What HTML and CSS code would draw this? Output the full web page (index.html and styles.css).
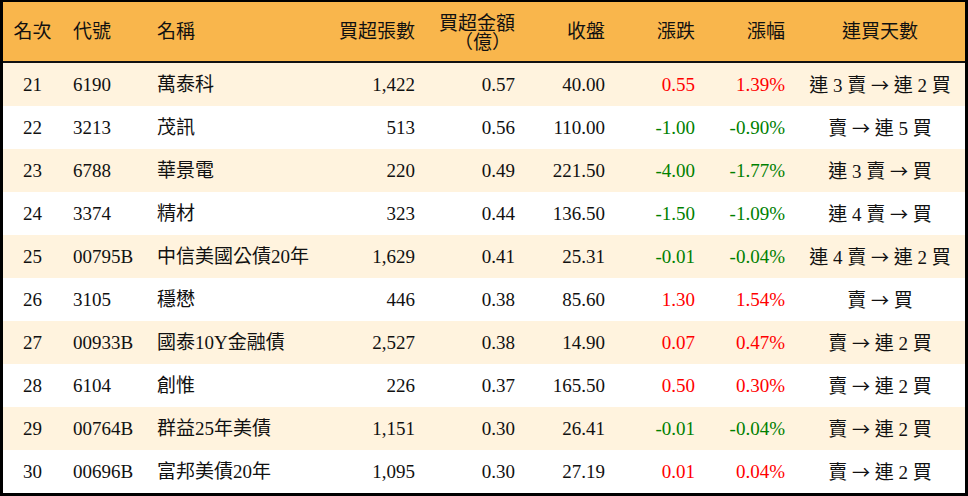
FILE: index.html
```html
<!DOCTYPE html>
<html lang="zh-Hant">
<head>
<meta charset="utf-8">
<title>買超排行</title>
<link rel="stylesheet" href="styles.css">
</head>
<body>
<div class="board">
<table class="rank">
<colgroup>
<col class="w1"><col class="w2"><col class="w3"><col class="w4"><col class="w5"><col class="w6"><col class="w7"><col class="w8"><col class="w9">
</colgroup>
<thead>
<tr>
<th class="c">名次</th>
<th class="l">代號</th>
<th class="l">名稱</th>
<th class="r">買超張數</th>
<th class="r two"><span class="line">買超金額</span><span class="line unit">（億）</span></th>
<th class="r">收盤</th>
<th class="r">漲跌</th>
<th class="r">漲幅</th>
<th class="c">連買天數</th>
</tr>
</thead>
<tbody>
<tr class="alt"><td class="c">21</td><td class="l">6190</td><td class="l">萬泰科</td><td class="r">1,422</td><td class="r">0.57</td><td class="r">40.00</td><td class="r up">0.55</td><td class="r up">1.39%</td><td class="c">連 3 賣 <span class="arrow">→</span> 連 2 買</td></tr>
<tr><td class="c">22</td><td class="l">3213</td><td class="l">茂訊</td><td class="r">513</td><td class="r">0.56</td><td class="r">110.00</td><td class="r down">-1.00</td><td class="r down">-0.90%</td><td class="c">賣 <span class="arrow">→</span> 連 5 買</td></tr>
<tr class="alt"><td class="c">23</td><td class="l">6788</td><td class="l">華景電</td><td class="r">220</td><td class="r">0.49</td><td class="r">221.50</td><td class="r down">-4.00</td><td class="r down">-1.77%</td><td class="c">連 3 賣 <span class="arrow">→</span> 買</td></tr>
<tr><td class="c">24</td><td class="l">3374</td><td class="l">精材</td><td class="r">323</td><td class="r">0.44</td><td class="r">136.50</td><td class="r down">-1.50</td><td class="r down">-1.09%</td><td class="c">連 4 賣 <span class="arrow">→</span> 買</td></tr>
<tr class="alt"><td class="c">25</td><td class="l">00795B</td><td class="l">中信美國公債20年</td><td class="r">1,629</td><td class="r">0.41</td><td class="r">25.31</td><td class="r down">-0.01</td><td class="r down">-0.04%</td><td class="c">連 4 賣 <span class="arrow">→</span> 連 2 買</td></tr>
<tr><td class="c">26</td><td class="l">3105</td><td class="l">穩懋</td><td class="r">446</td><td class="r">0.38</td><td class="r">85.60</td><td class="r up">1.30</td><td class="r up">1.54%</td><td class="c">賣 <span class="arrow">→</span> 買</td></tr>
<tr class="alt"><td class="c">27</td><td class="l">00933B</td><td class="l">國泰10Y金融債</td><td class="r">2,527</td><td class="r">0.38</td><td class="r">14.90</td><td class="r up">0.07</td><td class="r up">0.47%</td><td class="c">賣 <span class="arrow">→</span> 連 2 買</td></tr>
<tr><td class="c">28</td><td class="l">6104</td><td class="l">創惟</td><td class="r">226</td><td class="r">0.37</td><td class="r">165.50</td><td class="r up">0.50</td><td class="r up">0.30%</td><td class="c">賣 <span class="arrow">→</span> 連 2 買</td></tr>
<tr class="alt"><td class="c">29</td><td class="l">00764B</td><td class="l">群益25年美債</td><td class="r">1,151</td><td class="r">0.30</td><td class="r">26.41</td><td class="r down">-0.01</td><td class="r down">-0.04%</td><td class="c">賣 <span class="arrow">→</span> 連 2 買</td></tr>
<tr><td class="c">30</td><td class="l">00696B</td><td class="l">富邦美債20年</td><td class="r">1,095</td><td class="r">0.30</td><td class="r">27.19</td><td class="r up">0.01</td><td class="r up">0.04%</td><td class="c">賣 <span class="arrow">→</span> 連 2 買</td></tr>
</tbody>
</table>
</div>
</body>
</html>
```

FILE: styles.css
```css
html, body {
  margin: 0;
  padding: 0;
  background: #ffffff;
}

.board {
  width: 968px;
  height: 496px;
  box-sizing: border-box;
  border: 3px solid #000000;
  border-top-width: 2px;
  background: #ffffff;
  overflow: hidden;
}

.rank {
  width: 962px;
  border-collapse: collapse;
  table-layout: fixed;
  font-family: "Liberation Serif", "Noto Sans CJK TC", serif;
  font-size: 19px;
  color: #000000;
}

.w1 { width: 59px; }
.w2 { width: 84px; }
.w3 { width: 184px; }
.w4 { width: 95px; }
.w5 { width: 100px; }
.w6 { width: 90px; }
.w7 { width: 90px; }
.w8 { width: 90px; }
.w9 { width: 170px; }

.rank th,
.rank td {
  padding: 0;
  white-space: nowrap;
  vertical-align: middle;
}

.rank thead th {
  height: 59px;
  background: #f9b64c;
  font-weight: normal;
  border-bottom: 2px solid #111111;
  line-height: 19px;
  color: #111111;
}

.rank thead th.two {
  height: 56px;
  padding-top: 3px;
}

.rank .line {
  display: block;
  height: 19px;
  line-height: 19px;
}

.rank .unit {
  padding-right: 4px;
}

.rank tbody td {
  height: 42px;
  line-height: 20px;
  padding-top: 1px;
  color: #111111;
}

.rank tbody tr.alt td {
  background: #fff3de;
}

.arrow {
  font-family: "Noto Sans CJK TC", sans-serif;
  font-size: 18px;
}

.c { text-align: center; }
.l { text-align: left; padding-left: 11px !important; }
.r { text-align: right; padding-right: 10px !important; }

.rank td.up { color: #ff0000; }
.rank td.down { color: #008000; }
```
